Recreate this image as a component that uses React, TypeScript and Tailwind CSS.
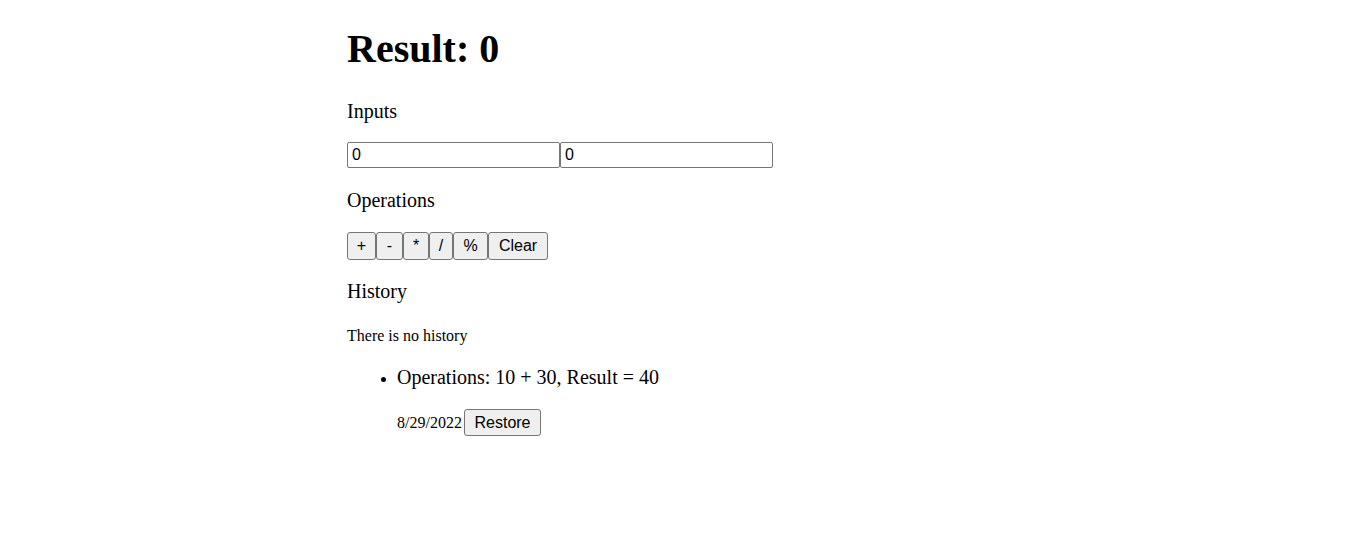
// 계산기 결과 / 기록 화면
import { useState } from 'react';

interface HistoryItem {
  id: number;
  a: number;
  b: number;
  op: string;
  result: number;
  date: string;
}

const ops = [
  { label: '+', w: 'w-[29px]' },
  { label: '-', w: 'w-[27px]' },
  { label: '*', w: 'w-[26px]' },
  { label: '/', w: 'w-[24px]' },
  { label: '%', w: 'w-[35px]' },
  { label: 'Clear', w: 'w-[60px]' },
];

export default function App() {
  const [a, setA] = useState('0');
  const [b, setB] = useState('0');
  const [result] = useState(0);
  const history: HistoryItem[] = [
    { id: 1, a: 10, b: 30, op: '+', result: 40, date: '8/29/2022' },
  ];

  const btn =
    'h-[28px] border border-[#767676] bg-[#efefef] rounded-[3px] text-[16px] leading-[20px] text-black font-["Liberation_Sans",Arial,sans-serif] text-center';
  const input =
    "w-[213px] h-[26px] border border-[#767676] rounded-[2px] pl-[4px] text-[16px] font-['Liberation_Sans',Arial,sans-serif] outline-none";

  return (
    <div className="min-h-screen bg-white text-black font-['Liberation_Serif','Times_New_Roman',serif]">
      <div className="mx-auto w-[671px] pt-[26px]">
        <h1 className="text-[40px] leading-[46px] font-bold">Result: {result}</h1>

        <p className="mt-[28px] text-[20px] leading-[23px]">Inputs</p>
        <div className="mt-[19px] flex">
          <input value={a} onChange={(e) => setA(e.target.value)} className={input} />
          <input value={b} onChange={(e) => setB(e.target.value)} className={input} />
        </div>

        <p className="mt-[21px] text-[20px] leading-[23px]">Operations</p>
        <div className="mt-[20px] flex">
          {ops.map((o) => (
            <button key={o.label} className={`${btn} ${o.w}`}>
              {o.label}
            </button>
          ))}
        </div>

        <p className="mt-[20px] text-[20px] leading-[23px]">History</p>
        <p className="mt-[24px] text-[16px] leading-[18px]">There is no history</p>

        <ul className="mt-[21px] pl-[50px] list-disc">
          {history.map((h) => (
            <li key={h.id}>
              <p className="text-[20px] leading-[23px]">
                Operations: {h.a} {h.op} {h.b}, Result = {h.result}
              </p>
              <div className="mt-[20px] text-[16px] leading-[18px]">
                <span className="inline-block w-[67px]">{h.date}</span>
                <button className="w-[77px] h-[27px] border border-[#767676] bg-[#efefef] rounded-[3px] text-[16px] leading-[19px] py-[3px] font-['Liberation_Sans',Arial,sans-serif]">
                  Restore
                </button>
              </div>
            </li>
          ))}
        </ul>
      </div>
    </div>
  );
}
